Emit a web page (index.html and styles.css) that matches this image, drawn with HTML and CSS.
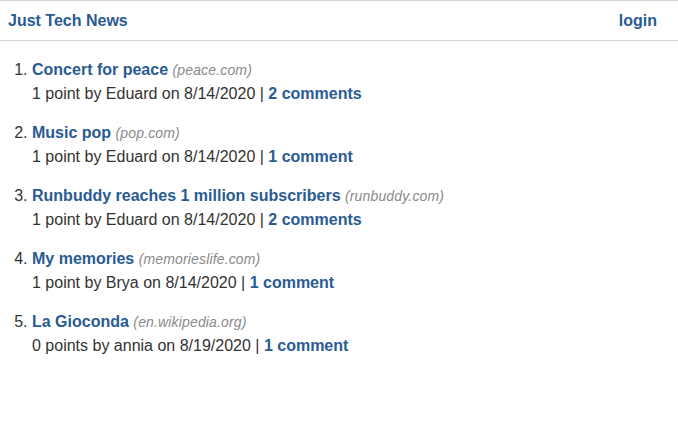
FILE: index.html
```html
<!DOCTYPE html>
<html>
<head>
<meta charset="utf-8">
<title>Just Tech News</title>
<link rel="stylesheet" href="styles.css">
</head>
<body>
<header class="topbar">
  <a class="brand" href="#">Just Tech News</a>
  <a class="login" href="#">login</a>
</header>
<ol class="posts">
  <li class="post">
    <div class="title-line"><a class="title" href="#">Concert for peace</a> <span class="domain">(peace.com)</span></div>
    <div class="meta">1 point by Eduard on 8/14/2020 | <a class="comments" href="#">2 comments</a></div>
  </li>
  <li class="post">
    <div class="title-line"><a class="title" href="#">Music pop</a> <span class="domain">(pop.com)</span></div>
    <div class="meta">1 point by Eduard on 8/14/2020 | <a class="comments" href="#">1 comment</a></div>
  </li>
  <li class="post">
    <div class="title-line"><a class="title" href="#">Runbuddy reaches 1 million subscribers</a> <span class="domain">(runbuddy.com)</span></div>
    <div class="meta">1 point by Eduard on 8/14/2020 | <a class="comments" href="#">2 comments</a></div>
  </li>
  <li class="post">
    <div class="title-line"><a class="title" href="#">My memories</a> <span class="domain">(memorieslife.com)</span></div>
    <div class="meta">1 point by Brya on 8/14/2020 | <a class="comments" href="#">1 comment</a></div>
  </li>
  <li class="post">
    <div class="title-line"><a class="title" href="#">La Gioconda</a> <span class="domain">(en.wikipedia.org)</span></div>
    <div class="meta">0 points by annia on 8/19/2020 | <a class="comments" href="#">1 comment</a></div>
  </li>
</ol>
</body>
</html>
```

FILE: styles.css
```css
html, body {
  margin: 0;
  padding: 0;
  background: #fff;
}
body {
  font-family: "Liberation Sans", Arial, sans-serif;
  font-size: 16px;
  color: #333;
}
a {
  text-decoration: none;
  color: #2a5b92;
  font-weight: bold;
}
.topbar {
  display: flex;
  justify-content: space-between;
  align-items: center;
  height: 39px;
  padding: 0 21px 0 8px;
  border-top: 1px solid #d4d4d4;
  border-bottom: 1px solid #d4d4d4;
}
.posts {
  margin: 17px 0 0 0;
  padding: 0 0 0 32px;
}
.post {
  line-height: 24px;
  margin-bottom: 15px;
}
.domain {
  font-style: italic;
  font-size: 14px;
  letter-spacing: 0.15px;
  color: #8a8a8a;
}
```
